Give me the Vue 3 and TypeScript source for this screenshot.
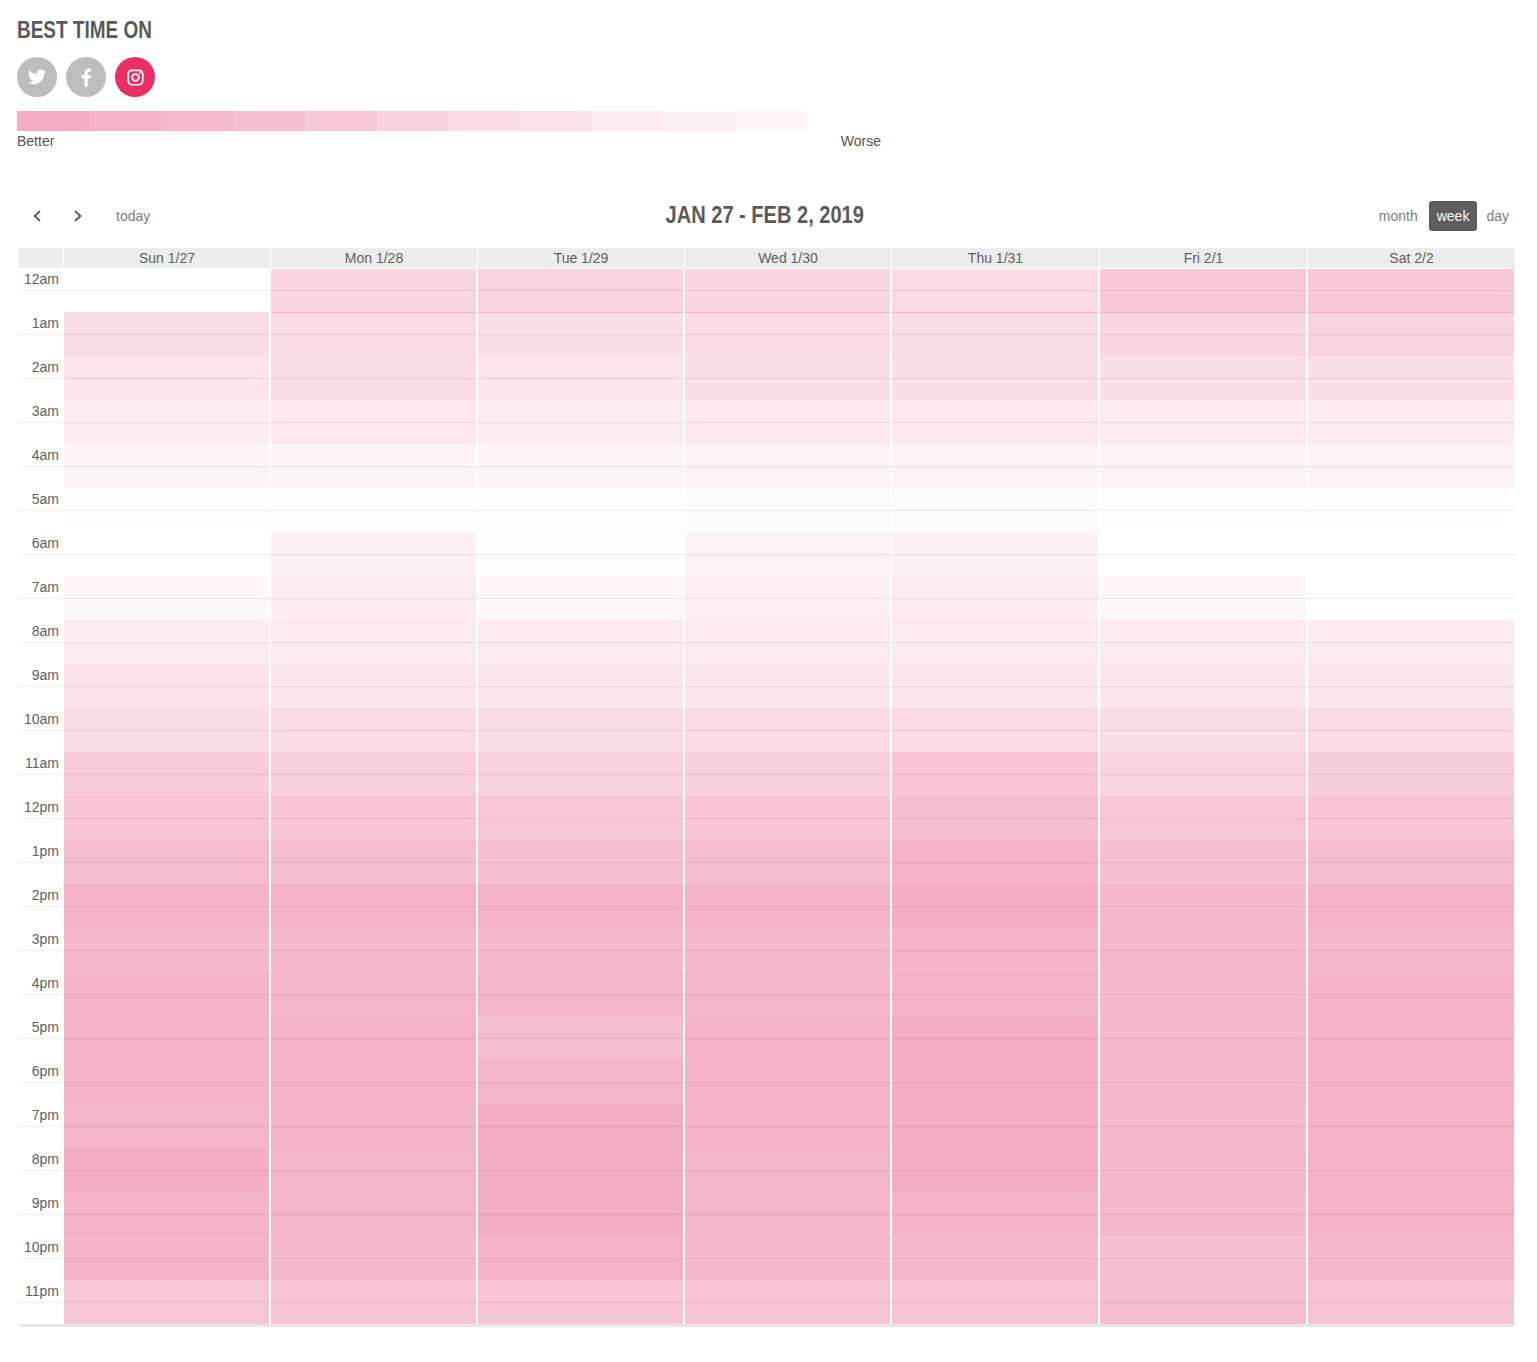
<script setup lang="ts">
const BASE = '225, 48, 100'
const fill = (a: number) => `rgba(${BASE}, ${a})`
const tone = (a: number) => fill(a > 0.3 ? +(a * 0.96).toFixed(3) : a)

const legend = [0.4, 0.37, 0.33, 0.3, 0.26, 0.22, 0.18, 0.14, 0.1, 0.07, 0.04]
const days = ['Sun 1/27', 'Mon 1/28', 'Tue 1/29', 'Wed 1/30', 'Thu 1/31', 'Fri 2/1', 'Sat 2/2']
const labels = ['12am', '1am', '2am', '3am', '4am', '5am', '6am', '7am', '8am', '9am', '10am', '11am',
  '12pm', '1pm', '2pm', '3pm', '4pm', '5pm', '6pm', '7pm', '8pm', '9pm', '10pm', '11pm']

const heat: number[][] = [
  [0, 0.2, 0.21, 0.2, 0.18, 0.26, 0.26],
  [0.17, 0.18, 0.16, 0.18, 0.17, 0.2, 0.21],
  [0.13, 0.17, 0.13, 0.16, 0.16, 0.16, 0.16],
  [0.09, 0.11, 0.09, 0.11, 0.11, 0.1, 0.1],
  [0.05, 0.05, 0.05, 0.06, 0.06, 0.06, 0.06],
  [0.01, 0.01, 0.01, 0.02, 0.025, 0.008, 0.008],
  [0, 0.07, 0.015, 0.06, 0.07, 0, 0],
  [0.04, 0.09, 0.04, 0.08, 0.09, 0.04, 0],
  [0.09, 0.1, 0.1, 0.1, 0.1, 0.1, 0.1],
  [0.14, 0.12, 0.12, 0.12, 0.12, 0.12, 0.12],
  [0.17, 0.18, 0.17, 0.18, 0.18, 0.16, 0.18],
  [0.25, 0.23, 0.22, 0.23, 0.28, 0.21, 0.24],
  [0.28, 0.28, 0.27, 0.28, 0.33, 0.27, 0.28],
  [0.34, 0.34, 0.32, 0.34, 0.38, 0.32, 0.34],
  [0.39, 0.39, 0.38, 0.38, 0.41, 0.35, 0.39],
  [0.35, 0.35, 0.35, 0.35, 0.38, 0.35, 0.35],
  [0.38, 0.37, 0.37, 0.37, 0.39, 0.35, 0.38],
  [0.38, 0.38, 0.34, 0.38, 0.41, 0.35, 0.38],
  [0.38, 0.38, 0.37, 0.38, 0.41, 0.35, 0.38],
  [0.37, 0.38, 0.41, 0.38, 0.41, 0.35, 0.39],
  [0.41, 0.37, 0.41, 0.37, 0.41, 0.36, 0.39],
  [0.39, 0.37, 0.41, 0.37, 0.38, 0.35, 0.39],
  [0.38, 0.36, 0.38, 0.35, 0.35, 0.32, 0.36],
  [0.27, 0.29, 0.28, 0.29, 0.29, 0.33, 0.29]
]
</script>

<template>
  <div class="page">
    <h2 class="heading">BEST TIME ON</h2>

    <div class="socials">
      <a class="social">
        <svg class="twitter" viewBox="0 0 24 24" aria-hidden="true">
          <path fill="#fff" d="M23.953 4.57a10 10 0 01-2.825.775 4.958 4.958 0 002.163-2.723c-.951.555-2.005.959-3.127 1.184a4.92 4.92 0 00-8.384 4.482C7.69 8.095 4.067 6.13 1.64 3.162a4.822 4.822 0 00-.666 2.475c0 1.71.87 3.213 2.188 4.096a4.904 4.904 0 01-2.228-.616v.06a4.923 4.923 0 003.946 4.827 4.996 4.996 0 01-2.212.085 4.936 4.936 0 004.604 3.417 9.867 9.867 0 01-6.102 2.105c-.39 0-.779-.023-1.17-.067a13.995 13.995 0 007.557 2.209c9.053 0 13.998-7.496 13.998-13.985 0-.21 0-.42-.015-.63A9.935 9.935 0 0024 4.59z" />
        </svg>
      </a>
      <a class="social">
        <svg class="facebook" viewBox="0 0 24 24" aria-hidden="true">
          <path fill="#fff" d="M13.6 23.5V13.2h3.5l.5-4h-4V6.6c0-1.2.3-1.9 2-1.9h2.1V1.1c-.4 0-1.6-.2-3.1-.2-3.1 0-5.200 1.900-5.200 5.300v3H6v4h3.400v10.300z" />
        </svg>
      </a>
      <a class="social active">
        <svg class="instagram" viewBox="0 0 24 24" aria-hidden="true">
          <rect x="1.800" y="1.800" width="20.400" height="20.400" rx="5.500" fill="none" stroke="#fff" stroke-width="2.400" />
          <circle cx="12" cy="12" r="4.700" fill="none" stroke="#fff" stroke-width="2.400" />
          <circle cx="18.300" cy="5.700" r="1.400" fill="#fff" />
        </svg>
      </a>
    </div>

    <div class="legend">
      <span v-for="a in legend" :key="a" class="swatch" :style="{ background: fill(a) }"></span>
    </div>
    <div class="legend-labels">
      <span>Better</span>
      <span>Worse</span>
    </div>

    <section class="calendar">
      <div class="toolbar">
        <div class="group">
          <button class="chev" type="button" aria-label="Previous">
            <svg viewBox="0 0 10 12" width="10" height="12"><path d="M8 1 2.700 6 8 11" fill="none" stroke="#5d5d5d" stroke-width="2" /></svg>
          </button>
          <button class="chev" type="button" aria-label="Next">
            <svg viewBox="0 0 10 12" width="10" height="12"><path d="M2 1 7.300 6 2 11" fill="none" stroke="#5d5d5d" stroke-width="2" /></svg>
          </button>
          <button class="text-btn today" type="button">today</button>
        </div>
        <h2 class="range">JAN 27 - FEB 2, 2019</h2>
        <div class="group views">
          <button class="text-btn" type="button">month</button>
          <button class="text-btn current" type="button">week</button>
          <button class="text-btn last" type="button">day</button>
        </div>
      </div>

      <div class="row head">
        <div class="head-axis"></div>
        <div v-for="d in days" :key="d" class="head-cell">{{ d }}</div>
      </div>

      <div v-for="(label, h) in labels" :key="label" class="row hour">
        <div class="axis cell">{{ label }}</div>
        <div v-for="(a, d) in heat[h]" :key="d" class="cell">
          <div
            class="heat"
            :class="{ first: h === 0, edge: h === 1 && d > 0 }"
            :style="{ background: tone(a) }"
          ></div>
        </div>
      </div>
      <div class="foot"></div>
    </section>
  </div>
</template>

<style scoped>
.page {
  width: 1537px;
  box-sizing: border-box;
  padding: 14px 0 35px 17px;
  background: #fff;
  font-family: "Liberation Sans", Arial, sans-serif;
  font-size: 14px;
  color: #5f5f5f;
}
.heading,
.range {
  margin: 0;
  font-family: "Liberation Sans", sans-serif;
  font-size: 24px;
  font-weight: 700;
  line-height: 30px;
  color: #5a5a5a;
}
.heading {
  padding-top: 1px;
  margin-bottom: -1px;
  transform: scaleX(0.79);
  transform-origin: left center;
}
.range {
  margin-bottom: 2px;
  transform: scaleX(0.835);
}
.socials {
  display: flex;
  gap: 9px;
  margin-top: 13px;
}
.social {
  display: flex;
  align-items: center;
  justify-content: center;
  width: 40px;
  height: 40px;
  border-radius: 50%;
  background: #bdbdbd;
}
.social.active {
  background: #e83065;
}
.twitter {
  width: 18px;
  height: 18px;
}
.facebook {
  width: 19px;
  height: 19px;
}
.instagram {
  width: 17px;
  height: 17px;
}
.legend {
  display: flex;
  width: 791px;
  height: 20px;
  margin-top: 14px;
}
.swatch {
  flex: 1;
}
.legend-labels {
  display: flex;
  justify-content: space-between;
  width: 864px;
  line-height: 20px;
  color: #555;
}
.calendar {
  width: 1496px;
  margin: 50px 0 0 2px;
}
.toolbar {
  display: flex;
  align-items: center;
  justify-content: space-between;
  height: 30px;
  margin-bottom: 17px;
}
.group {
  display: flex;
  align-items: center;
}
.chev {
  display: flex;
  align-items: center;
  justify-content: center;
  width: 36px;
  height: 30px;
  margin-right: 5px;
  padding: 0;
  border: 0;
  background: none;
}
.text-btn {
  height: 30px;
  padding: 0 8px;
  border: 0;
  border-radius: 3px;
  background: none;
  font: inherit;
  color: #7d7d7d;
}
.today {
  margin-left: 7px;
}
.views {
  gap: 3px;
}
.current {
  background: #5d5d5d;
  color: #fff;
}
.last {
  padding: 0 6px;
}
.row {
  display: grid;
  grid-template-columns: 45px repeat(4, 207px) repeat(2, 208px) 207px;
}
.head {
  height: 20px;
  line-height: 20px;
  text-align: center;
}
.head-axis,
.head-cell {
  margin-right: 1px;
  background: #ededed;
}
.head-cell:last-child {
  margin-right: 0;
}
.hour {
  height: 44px;
}
.cell {
  position: relative;
  height: 44px;
}
.cell::after {
  content: "";
  position: absolute;
  top: 22px;
  left: 0;
  right: 0;
  height: 1px;
  background: rgba(0, 0, 0, 0.07);
}
.axis {
  box-sizing: border-box;
  padding-right: 5px;
  text-align: right;
  line-height: 22px;
}
.axis::after {
  right: 1px;
}
.heat {
  height: 44px;
  margin-right: 2px;
}
.cell:last-child .heat {
  margin-right: 1px;
}
.heat.first {
  height: 43px;
  margin-top: 1px;
}
.heat.edge {
  box-shadow: inset 0 1px 0 rgba(232, 48, 100, 0.25);
}
.foot {
  height: 3px;
  background: #e6e6e6;
}
</style>
